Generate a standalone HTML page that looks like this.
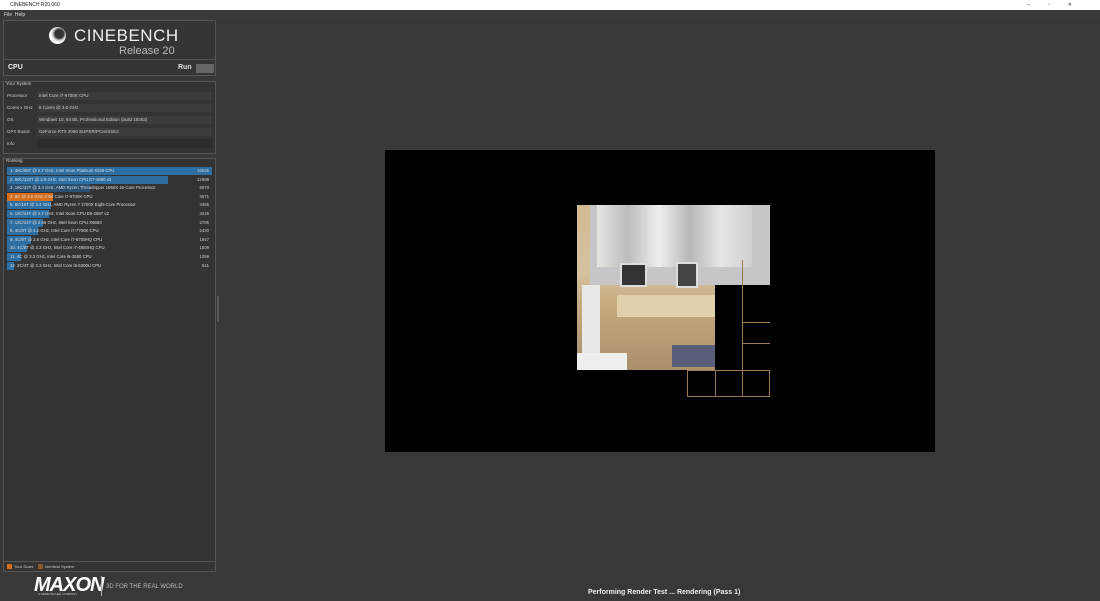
<!DOCTYPE html>
<html><head><meta charset="utf-8"><style>
*{margin:0;padding:0;box-sizing:border-box}
body{width:1100px;height:601px;background:#383838;font-family:"Liberation Sans",sans-serif;position:relative;overflow:hidden;color:#ccc}
.a{position:absolute}
.title{left:0;top:0;width:1100px;height:10px;background:#fff;font-size:5px;color:#222;line-height:10px;padding-left:10px}
.menu{top:10px;left:0;width:1100px;height:10px;background:#3a3a3a;font-size:5px;color:#ddd;line-height:10px;padding-left:4px}
.box{border:1px solid #555;background:#333}
.lbl{font-size:4.5px;color:#ccc}
.row{position:absolute;left:3px;width:208px;height:8px;font-size:4.3px;line-height:8px;color:#ddd;padding-left:3px}
.bar{position:absolute;left:3px;height:8px;background:#2e6fa3}
.sc{position:absolute;right:6px;font-size:4.3px;line-height:8px;color:#ccc}
</style></head><body>
<div class="a title">CINEBENCH R20.060<span style="position:absolute;right:10px;top:0;letter-spacing:18px">–▫✕</span></div>
<div class="a menu">File&nbsp;&nbsp;Help</div>

<div class="a box" style="left:3px;top:20px;width:213px;height:56px;background:#353535">
 <div class="a" style="left:45px;top:6px;width:17px;height:17px;border-radius:50%;background:radial-gradient(circle at 60% 40%,#333 30%,#ccc 45%,#fff 60%)"></div>
 <div class="a" style="left:70px;top:5px;font-size:17px;color:#eee;letter-spacing:0.5px">CINEBENCH</div>
 <div class="a" style="left:115px;top:24px;font-size:11px;color:#bbb">Release 20</div>
 <div class="a" style="left:0;top:38px;width:211px;border-top:1px solid #555"></div>
 <div class="a" style="left:4px;top:43px;font-size:7px;font-weight:bold;color:#eee">CPU</div>
 <div class="a" style="left:174px;top:43px;font-size:7px;font-weight:bold;color:#ddd">Run</div>
 <div class="a" style="left:192px;top:43px;width:18px;height:9px;background:#666;border-radius:1px"></div>
</div>

<div class="a box" style="left:3px;top:81px;width:213px;height:73px">
 <div class="a lbl" style="left:2px;top:-1px">Your System</div>
 <div class="a lbl" style="left:3px;top:11px">Processor</div><div class="a" style="left:33px;top:10px;width:175px;height:8px;background:#3c3c3c"></div><div class="a lbl" style="left:35px;top:11px">Intel Core i7-9700K CPU</div>
 <div class="a lbl" style="left:3px;top:23px">Cores x GHz</div><div class="a" style="left:33px;top:22px;width:175px;height:8px;background:#3c3c3c"></div><div class="a lbl" style="left:35px;top:23px">8 Cores @ 3.6 GHz</div>
 <div class="a lbl" style="left:3px;top:35px">OS</div><div class="a" style="left:33px;top:34px;width:175px;height:8px;background:#3c3c3c"></div><div class="a lbl" style="left:35px;top:35px">Windows 10, 64 Bit, Professional Edition (build 18363)</div>
 <div class="a lbl" style="left:3px;top:47px">GFX Board</div><div class="a" style="left:33px;top:46px;width:175px;height:8px;background:#3c3c3c"></div><div class="a lbl" style="left:35px;top:47px">GeForce RTX 2080 SUPER/PCIe/SSE2</div>
 <div class="a lbl" style="left:3px;top:59px">Info</div><div class="a" style="left:33px;top:57px;width:175px;height:9px;background:#2c2c2c"></div>
</div>

<div class="a box" style="left:3px;top:158px;width:213px;height:414px">
 <div class="a lbl" style="left:2px;top:-1px">Ranking</div>
 <div class="bar" style="top:8px;width:205px"></div>
 <div class="bar" style="top:16.6px;width:161px"></div>
 <div class="bar" style="top:25.2px;width:83px;background:#2a4f70"></div>
 <div class="bar" style="top:33.8px;width:46px;background:#d46f1e"></div>
 <div class="bar" style="top:42.4px;width:44px"></div>
 <div class="bar" style="top:51px;width:42px"></div>
 <div class="bar" style="top:59.6px;width:36px"></div>
 <div class="bar" style="top:68.2px;width:31px"></div>
 <div class="bar" style="top:76.8px;width:24px"></div>
 <div class="bar" style="top:85.4px;width:20px"></div>
 <div class="bar" style="top:94px;width:14px"></div>
 <div class="bar" style="top:102.6px;width:7px"></div>
 <div class="row" style="top:8px">1. 48C/96T @ 2.7 GHz, Intel Xeon Platinum 8168 CPU</div><div class="sc" style="top:8px">16536</div>
 <div class="row" style="top:16.6px">2. 60C/120T @ 2.8 GHz, Intel Xeon CPU E7-4890 v2</div><div class="sc" style="top:16.6px">12986</div>
 <div class="row" style="top:25.2px">3. 16C/32T @ 3.4 GHz, AMD Ryzen Threadripper 1950X 16-Core Processor</div><div class="sc" style="top:25.2px">6670</div>
 <div class="row" style="top:33.8px">4. 8C @ 3.6 GHz, Intel Core i7-9700K CPU</div><div class="sc" style="top:33.8px">3571</div>
 <div class="row" style="top:42.4px">5. 8C/16T @ 3.4 GHz, AMD Ryzen 7 1700X Eight-Core Processor</div><div class="sc" style="top:42.4px">3455</div>
 <div class="row" style="top:51px">6. 12C/24T @ 2.7 GHz, Intel Xeon CPU E5-2697 v2</div><div class="sc" style="top:51px">3225</div>
 <div class="row" style="top:59.6px">7. 12C/24T @ 2.66 GHz, Intel Xeon CPU X5650</div><div class="sc" style="top:59.6px">2705</div>
 <div class="row" style="top:68.2px">8. 4C/8T @ 4.2 GHz, Intel Core i7-7700K CPU</div><div class="sc" style="top:68.2px">2420</div>
 <div class="row" style="top:76.8px">9. 4C/8T @ 2.6 GHz, Intel Core i7-6700HQ CPU</div><div class="sc" style="top:76.8px">1647</div>
 <div class="row" style="top:85.4px">10. 4C/8T @ 2.3 GHz, Intel Core i7-4850HQ CPU</div><div class="sc" style="top:85.4px">1509</div>
 <div class="row" style="top:94px">11. 4C @ 3.3 GHz, Intel Core i5-3550 CPU</div><div class="sc" style="top:94px">1059</div>
 <div class="row" style="top:102.6px">12. 2C/4T @ 2.3 GHz, Intel Core i5-5300U CPU</div><div class="sc" style="top:102.6px">541</div>
 <div class="a" style="left:0;top:402px;width:211px;border-top:1px solid #555"></div>
 <div class="a" style="left:3px;top:405px;width:5px;height:5px;background:#d46f1e"></div>
 <div class="a lbl" style="left:10px;top:405px;font-size:4px">Your Score</div>
 <div class="a" style="left:34px;top:405px;width:5px;height:5px;background:#8a5a2a"></div>
 <div class="a lbl" style="left:41px;top:405px;font-size:4px">Identical System</div>
</div>

<div class="a" style="left:34px;top:574px;font-size:20px;font-weight:900;font-style:italic;color:#fff;letter-spacing:-1px">MAXON</div>
<div class="a" style="left:38px;top:592px;font-size:3px;color:#ccc">A NEMETSCHEK COMPANY</div>
<div class="a" style="left:101px;top:576px;height:20px;border-left:1px solid #aaa"></div>
<div class="a" style="left:106px;top:584px;font-size:6px;color:#bbb">3D FOR THE REAL WORLD</div>
<div class="a" style="left:217px;top:296px;width:2px;height:26px;background:#555"></div>

<div class="a" style="left:385px;top:150px;width:550px;height:302px;background:#000"></div>
<div class="a" style="left:577px;top:205px;width:193px;height:165px;background:linear-gradient(180deg,#d2b990 0%,#d7c2a0 40%,#c6ab80 60%,#a98f6a 100%)">
 <div class="a" style="left:13px;top:0;width:180px;height:80px;background:#c4c6c8"></div>
 <div class="a" style="left:20px;top:0;width:155px;height:62px;background:linear-gradient(90deg,#e4e4e2,#bcbcbc,#eeeeee,#b8b8b6,#e6e6e6,#d0d0d0)"></div>
 <div class="a" style="left:43px;top:58px;width:27px;height:24px;background:#333;border:2px solid #ddd"></div>
 <div class="a" style="left:99px;top:57px;width:22px;height:26px;background:#444;border:2px solid #ddd"></div>
 <div class="a" style="left:40px;top:90px;width:130px;height:22px;background:#e2d0ac"></div>
 <div class="a" style="left:5px;top:80px;width:18px;height:70px;background:#e8e8e4"></div>
 <div class="a" style="left:0;top:148px;width:50px;height:17px;background:#eeeeec"></div>
 <div class="a" style="left:95px;top:140px;width:50px;height:22px;background:#5a5e7a"></div>
</div>
<div class="a" style="left:715px;top:285px;width:55px;height:85px;background:#000"></div>
<div class="a" style="left:687px;top:370px;width:83px;height:27px;background:#000;border:1px solid #9a7a50"></div>
<div class="a" style="left:715px;top:370px;height:27px;border-left:1px solid #9a7a50"></div>
<div class="a" style="left:742px;top:260px;height:137px;border-left:1px solid #9a7a50"></div>
<div class="a" style="left:742px;top:322px;width:28px;border-top:1px solid #9a7a50"></div>
<div class="a" style="left:742px;top:343px;width:28px;border-top:1px solid #9a7a50"></div>

<div class="a" style="left:588px;top:589px;font-size:7px;font-weight:bold;color:#eee">Performing Render Test ... Rendering (Pass 1)</div>
</body></html>
